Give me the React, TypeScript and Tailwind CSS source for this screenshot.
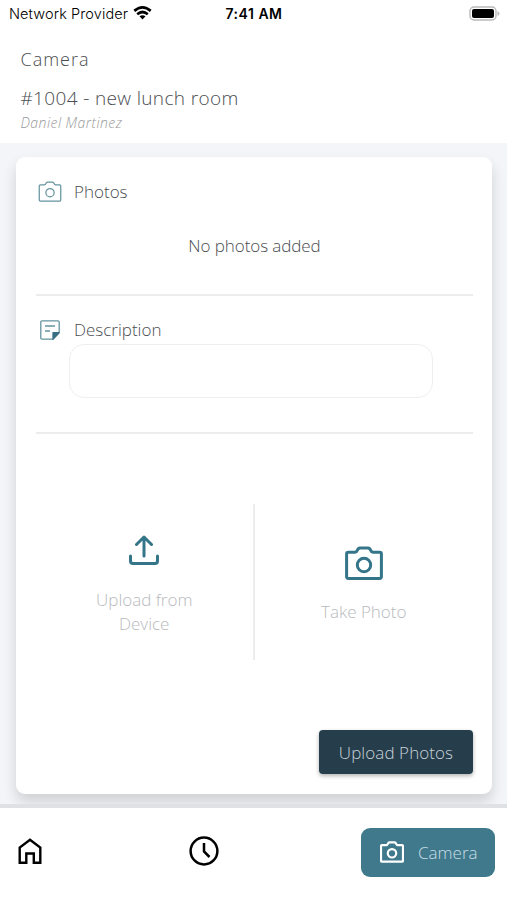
import React from "react";

function CameraIcon({ className, stroke = 2 }: { className: string; stroke?: number }) {
  return (
    <svg viewBox="0 0 38 34" fill="none" stroke="currentColor" strokeWidth={stroke} strokeLinejoin="round" className={className}>
      <path d="M3.400 6.200h6.600q1.600 0 2.200-1.700Q13.100 1.900 15 1.900h8q1.900 0 2.800 2.600.600 1.700 2.200 1.700h6.600q1.800 0 1.800 1.800v22.800q0 1.600-1.800 1.600H3.400q-1.800 0-1.800-1.600V8q0-1.800 1.800-1.800z" />
      <circle cx="19" cy="19" r="6.700" />
    </svg>
  );
}

function WifiIcon() {
  return (
    <svg viewBox="0 0 19 14" className="mb-[2px] ml-[5px] h-[14px] w-[19px]" fill="none" stroke="#000" strokeWidth="2.700">
      <path d="M1.300 4.900Q9.500-2 17.700 4.900" />
      <path d="M4.200 8.200Q9.500 3.800 14.800 8.200" />
      <path d="M6.500 10.200Q9.500 8.100 12.500 10.200L9.500 13.500z" fill="#000" stroke="none" />
    </svg>
  );
}

function Header() {
  return (
    <header className="h-[143px] shrink-0 bg-white">
      <div className="grid h-[27px] grid-cols-3 items-center pr-[7px] pl-[9px] font-['Inter','Liberation_Sans',sans-serif] text-[14.500px] text-black">
        <div className="flex items-center whitespace-nowrap">
          <span className="tracking-[0.1px]">Network Provider</span>
          <WifiIcon />
        </div>
        <span className="pr-[1px] text-center text-[14px] font-semibold tracking-[0.5px] whitespace-nowrap">7:41 AM</span>
        <div className="flex items-center justify-end">
          <svg viewBox="0 0 31 15" className="h-[15px] w-[31px]">
            <rect x="1" y="1" width="26" height="13" rx="4" fill="none" stroke="#b9b9b9" strokeWidth="1.400" />
            <rect x="3" y="3" width="22" height="9" rx="2" fill="#000" />
            <path d="M28.500 5q2 1 2 2.500t-2 2.500z" fill="#b9b9b9" />
          </svg>
        </div>
      </div>
      <div className="pl-[20.500px] text-[#4a4d50]">
        <h1 className="mt-[19px] text-[18px] leading-[26px] tracking-[1px]">Camera</h1>
        <h2 className="mt-[13px] text-[19px] leading-[26px] tracking-[0.350px]">#1004 - new lunch room</h2>
        <p className="text-[14px] leading-[24px] tracking-[0.450px] text-[#98999b] italic">Daniel Martinez</p>
      </div>
    </header>
  );
}

export default function App() {
  return (
    <div className="flex h-[900px] w-full flex-col overflow-hidden bg-[#f3f5f9] font-['Open_Sans','Noto_Sans',sans-serif] font-light">
      <Header />
      <main className="h-[665px] shrink-0 overflow-hidden border-b-[4px] border-[#dfe1e5] pt-[14px] pr-[15px] pl-[16px]">
        <section className="flex h-[637px] flex-col rounded-[9px] bg-white pr-[19px] pl-[20px] text-[#4a4d50] shadow-[0_8px_14px_rgba(0,0,0,0.15)]">
          <div className="flex h-[139px] flex-col border-b-2 border-[#ececed]">
            <div className="mt-[21px] flex h-[27px] items-center gap-[12px] pl-[2px]">
              <CameraIcon className="h-[21px] w-[24px] text-[#64949f]" stroke={2} />
              <h3 className="text-[17px]">Photos</h3>
            </div>
            <p className="mt-[28px] text-center text-[17px] leading-[26px] tracking-[-0.080px]">No photos added</p>
          </div>
          <div className="flex h-[138px] flex-col border-b-2 border-[#ececed]">
            <div className="mt-[20px] flex h-[27px] items-center gap-[14px] pl-[4px]">
              <svg viewBox="0 0 20 20" className="h-[20px] w-[20px]" fill="none" stroke="#64949f" strokeWidth="1.300" strokeLinejoin="round">
                <path d="M13 19.200H2q-1.200 0-1.200-1.200V2Q.8.800 2 .800h16q1.200 0 1.200 1.200v10.500" />
                <path d="M5 6h10M5 11h5" />
                <path d="M13 19.200v-6.500h6.200z" fill="#397083" stroke="#397083" />
              </svg>
              <h3 className="text-[17px]">Description</h3>
            </div>
            <textarea aria-label="Description" className="mt-[1px] ml-[33px] block h-[54px] w-[364px] resize-none rounded-[15px] border border-[#eeeff0] bg-white outline-none" />
          </div>
          <div className="mt-[70px] grid h-[156px] grid-cols-2 text-center text-[17px] text-[#b7babe]">
            <button className="flex flex-col items-center border-r-2 border-[#ececed] pt-[31px]">
              <svg viewBox="0 0 30 30" className="h-[30px] w-[30px]" fill="none" stroke="#34758a" strokeWidth="3" strokeLinecap="round" strokeLinejoin="round">
                <path d="M15 21V2.500M7.500 9.500L15 2l7.500 7.500M1.500 21v5q0 2.500 2.500 2.500h22q2.500 0 2.500-2.500v-5" />
              </svg>
              <span className="mt-[23px] w-[110px] leading-[24px]">Upload from Device</span>
            </button>
            <button className="flex flex-col items-center pt-[42px]">
              <CameraIcon className="h-[34px] w-[38px] text-[#34758a]" stroke={3} />
              <span className="mt-[20px] leading-[24px]">Take Photo</span>
            </button>
          </div>
          <button className="mt-[70px] h-[44px] w-[154px] self-end rounded-[4px] bg-[#263d4b] pt-[2px] text-[17px] tracking-[0.080px] text-[#c7d2d9] shadow-[0_2px_4px_rgba(0,0,0,0.3)]">Upload Photos</button>
        </section>
      </main>
      <nav className="flex flex-1 items-start bg-white pt-[20px] pr-[12px] pl-[18px]">
        <button aria-label="Home" className="mt-[10px]">
          <svg viewBox="0 0 24 26" className="h-[26px] w-[24px]" fill="none" stroke="#000" strokeWidth="2.400">
            <path d="M1.700 24.700V9.500L12 1.700l10.300 7.800v15.200h-6.500v-9.200H8.300v9.200z" />
          </svg>
        </button>
        <button aria-label="History" className="mt-[8px] ml-[147px]">
          <svg viewBox="0 0 30 30" className="h-[30px] w-[30px]" fill="none" stroke="#000" strokeWidth="2.500">
            <circle cx="15" cy="15" r="13.400" />
            <path d="M15 7v8.500l5.500 5.500" />
          </svg>
        </button>
        <button className="ml-auto flex h-[49px] w-[134px] items-center rounded-[9px] bg-[#41798c] pl-[19px] text-[17px] text-[#c8dee7]">
          <CameraIcon className="mb-[2px] h-[22px] w-[24px] text-white" stroke={3.500} />
          <span className="ml-[14px]">Camera</span>
        </button>
      </nav>
    </div>
  );
}
